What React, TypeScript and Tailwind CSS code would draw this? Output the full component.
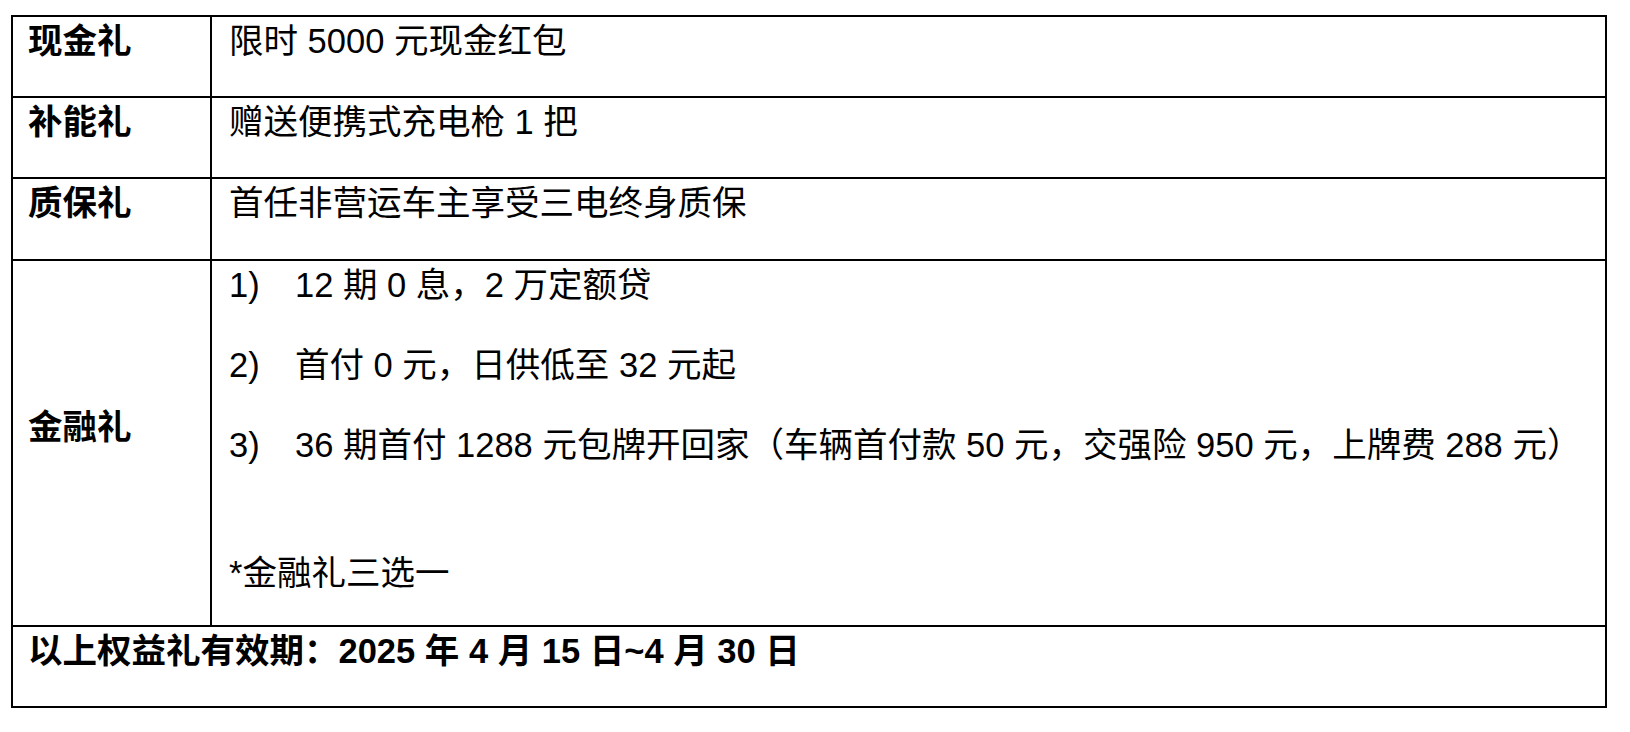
import React from 'react';

const simpleRows = [
  { label: '现金礼', text: '限时 5000 元现金红包', h: 'h-[81px]' },
  { label: '补能礼', text: '赠送便携式充电枪 1 把', h: 'h-[81px]' },
  { label: '质保礼', text: '首任非营运车主享受三电终身质保', h: 'h-[82px]' },
];

const finance = [
  { no: '1)', text: '12 期 0 息，2 万定额贷' },
  { no: '2)', text: '首付 0 元，日供低至 32 元起' },
  { no: '3)', text: '36 期首付 1288 元包牌开回家（车辆首付款 50 元，交强险 950 元，上牌费 288 元）' },
];

const App: React.FC = () => {
  return (
    <div className="min-h-screen bg-white pt-[15px] pl-[11px] text-[34.5px] leading-[48px] text-black font-['Liberation_Sans','Noto_Sans_CJK_SC',sans-serif]">
      <div className="w-[1596px] border-2 border-black">
        {/* single-line gift rows */}
        {simpleRows.map((row) => (
          <div key={row.label} className={`flex border-b-2 border-black ${row.h}`}>
            <div className="w-[199px] shrink-0 border-r-2 border-black pl-[15px] font-bold">{row.label}</div>
            <div className="flex-1 pl-[17px]">{row.text}</div>
          </div>
        ))}

        {/* finance row */}
        <div className="flex h-[366px] border-b-2 border-black">
          <div className="w-[199px] shrink-0 border-r-2 border-black pl-[15px] font-bold flex items-center">
            <p className="pb-[32px]">金融礼</p>
          </div>
          <div className="flex-1 pl-[17px]">
            <div className="flex flex-col gap-[32px]">
              {finance.map((f) => (
                <p key={f.no} className="flex">
                  <span className="w-[66px] shrink-0">{f.no}</span>
                  <span>{f.text}</span>
                </p>
              ))}
            </div>
            <p className="mt-[80px]">*金融礼三选一</p>
          </div>
        </div>

        {/* validity */}
        <div className="h-[79px] pl-[15px] font-bold">以上权益礼有效期：2025 年 4 月 15 日~4 月 30 日</div>
      </div>
    </div>
  );
};

export default App;
